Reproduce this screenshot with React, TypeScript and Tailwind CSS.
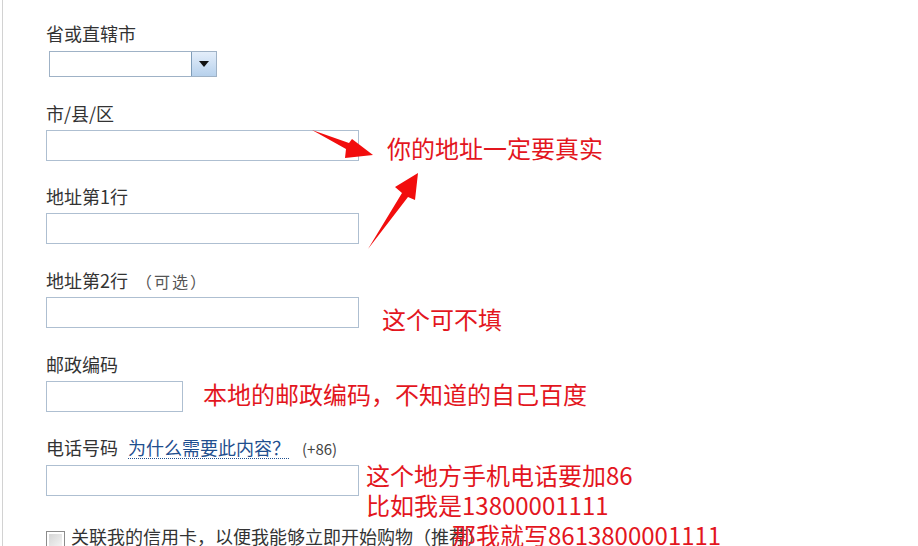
import React from 'react';

const labelCls = 'block text-[18px] leading-[24px] text-[#333]';
const inputCls = 'h-[31px] border border-[#aebfd1] bg-white';
const noteCls = 'text-[24px] leading-[32px] text-[#e3161e] whitespace-nowrap';

export default function App() {
  return (
    <div
      className="relative h-[546px] w-[918px] overflow-hidden bg-white"
      style={{ fontFamily: '"Noto Sans CJK SC", "Noto Sans", sans-serif' }}
    >
      <div className="ml-[2px] h-full border-l border-[#d2d2d2] pl-[43px] pt-[21px]">
        {/* 省或直辖市 */}
        <label className={labelCls}>省或直辖市</label>
        <div className="mt-[6px] ml-[3px] flex h-[26px] w-[168px] border border-[#9fb2c6] bg-white">
          <div className="flex-1" />
          <div className="flex w-[25px] items-center justify-center border-l border-[#7f9db9] bg-gradient-to-b from-[#e4eefa] to-[#b7d1ec]">
            <svg width="10" height="6" viewBox="0 0 10 6">
              <path d="M0 0 H10 L5 6 Z" fill="#111" />
            </svg>
          </div>
        </div>

        {/* 市/县/区 */}
        <label className={`${labelCls} mt-[24px]`}>市/县/区</label>
        <div className="mt-[5px] flex h-[31px] items-start">
          <div className={`${inputCls} w-[313px] shrink-0`} />
          <span className={`${noteCls} ml-[28px] mt-[2px]`}>你的地址一定要真实</span>
        </div>

        {/* 地址第1行 */}
        <label className={`${labelCls} mt-[23px]`}>地址第1行</label>
        <div className={`${inputCls} mt-[5px] w-[313px]`} />

        {/* 地址第2行 */}
        <label className={`${labelCls} mt-[24px] flex items-baseline`}>
          <span>地址第2行</span>
          <span className="ml-[8px] text-[16px] tracking-[2px] text-[#555]">（可选）</span>
        </label>
        <div className="mt-[4px] flex h-[31px] items-start">
          <div className={`${inputCls} w-[313px] shrink-0`} />
          <span className={`${noteCls} ml-[23px] mt-[6px]`}>这个可不填</span>
        </div>

        {/* 邮政编码 */}
        <label className={`${labelCls} mt-[24px]`}>邮政编码</label>
        <div className="mt-[5px] flex h-[31px] items-start">
          <div className={`${inputCls} w-[137px] shrink-0`} />
          <span className={`${noteCls} ml-[20px] -mt-[3px]`}>本地的邮政编码，不知道的自己百度</span>
        </div>

        {/* 电话号码 */}
        <label className={`${labelCls} mt-[23px] flex items-baseline`}>
          <span>电话号码</span>
          <a className="ml-[10px] text-[#1f4f8f] underline decoration-dotted decoration-1 underline-offset-[3px]">
            为什么需要此内容？
          </a>
          <span className="ml-[12px] text-[15px] text-[#444]">(+86)</span>
        </label>
        <div className="relative mt-[4px]">
          <div className={`${inputCls} w-[313px]`} />
          <div className="absolute left-[320px] top-[-5px] z-10 text-[24px] leading-[30px] text-[#e3161e] whitespace-nowrap">
            <div>这个地方手机电话要加86</div>
            <div>比如我是13800001111</div>
            <div className="ml-[86px]">那我就写8613800001111</div>
          </div>
        </div>

        {/* checkbox */}
        <div className="mt-[28px] flex items-start">
          <div className="mt-[7px] flex h-[19px] w-[19px] shrink-0 items-center justify-center border border-[#8c8c8c] bg-white">
            <div className="h-[13px] w-[13px] bg-gradient-to-br from-[#d6d6d6] to-[#f4f4f4]" />
          </div>
          <span className="ml-[6px] text-[18px] leading-[24px] text-[#333] whitespace-nowrap">
            关联我的信用卡，以便我能够立即开始购物（推荐）
          </span>
        </div>
      </div>

      {/* red arrows drawn over the form */}
      <svg className="pointer-events-none absolute left-0 top-0 z-20" width="918" height="546">
        <polygon points="312,130 349,143 352,139 373,155 345,158 346,149" fill="#f20d0d" />
        <polygon points="368,249 402,193 395,187 418,173 415,200 408,197" fill="#f20d0d" />
      </svg>
    </div>
  );
}
